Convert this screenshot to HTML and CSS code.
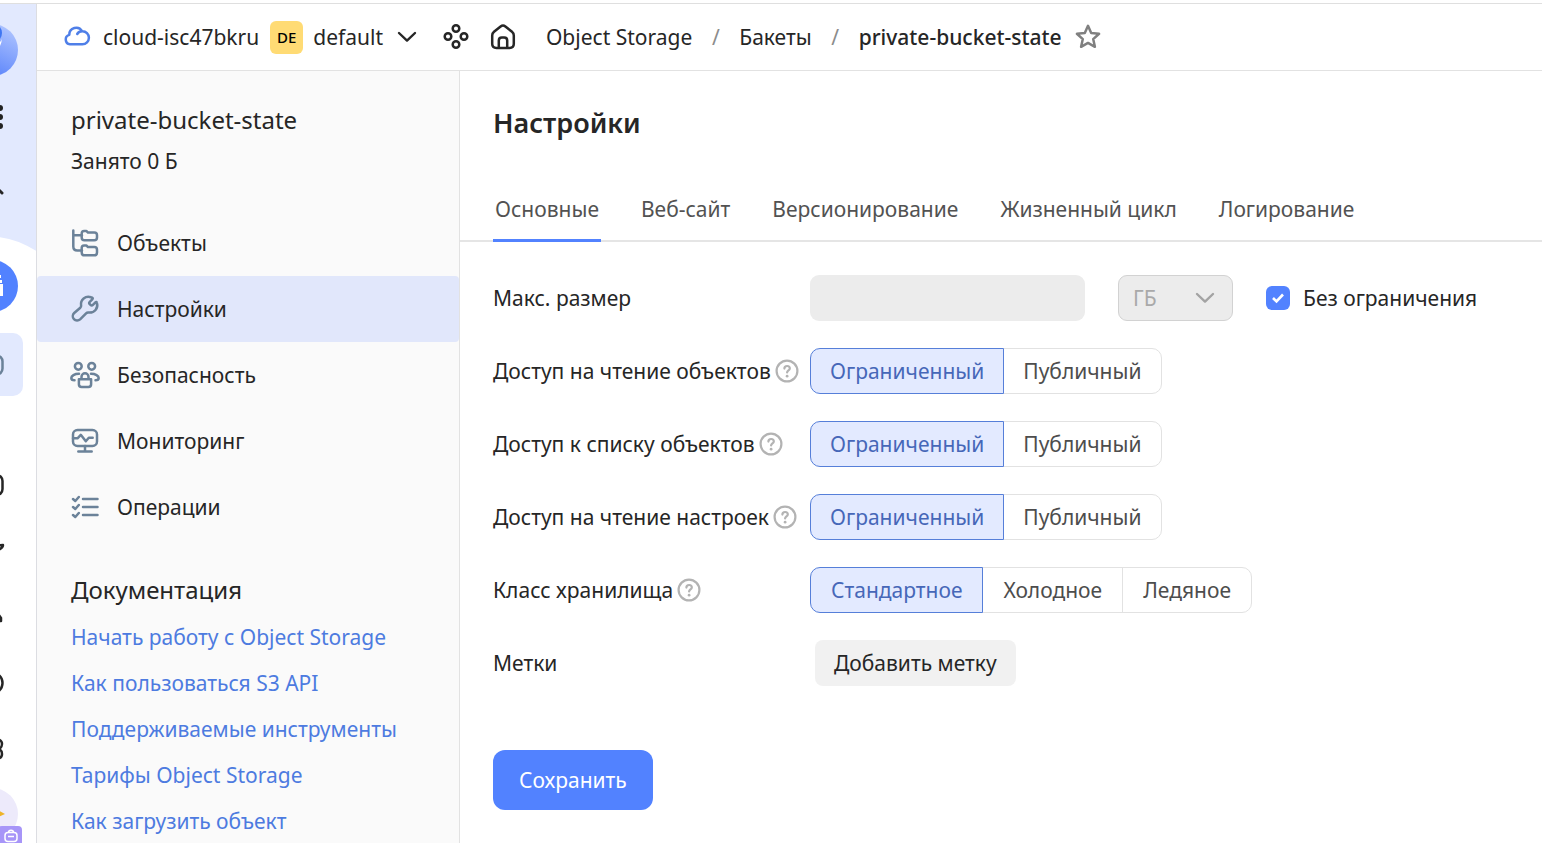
FILE: index.html
```html
<!DOCTYPE html>
<html lang="ru">
<head>
<meta charset="utf-8">
<meta name="viewport" content="width=device-width, initial-scale=1">
<title>private-bucket-state</title>
<link rel="stylesheet" href="styles.css">
</head>
<body>
<svg class="defs" aria-hidden="true">
  <symbol id="help" viewBox="0 0 24 24"><circle cx="12" cy="12" r="10.4" stroke-width="2.2"/><path d="M9.4 9.6c0-1.500 1.100-2.600 2.700-2.600s2.700 1 2.700 2.400c0 2-2.700 2.100-2.700 4.100" stroke-width="2.2"/><path d="M12.1 17.100v.1" stroke-width="2.8"/></symbol>
  <symbol id="chevron" viewBox="0 0 20 12"><path d="m2 2 8 7.600 8-7.600" stroke-width="2.400"/></symbol>
</svg>
<div class="app">
  <nav class="rail" aria-label="Сервисы">
    <div class="rail-top">
      <a class="rail-logo" href="#" aria-label="Главная"><svg width="52" height="52" viewBox="0 0 52 52"><defs><linearGradient id="g" x1="1" y1="0" x2="0.500" y2="1"><stop offset="0" stop-color="#b9ccff"/><stop offset="1" stop-color="#5b84fb"/></linearGradient></defs><circle cx="26" cy="26" r="26" fill="url(#g)"/><circle cx="26" cy="9" r="10" fill="#3f76f2"/><path d="M22 18c7 4 12 2 14-3-1 8-5 13-13 14z" fill="#fff"/></svg></a>
      <button class="rail-item" aria-label="Все сервисы"><svg class="ico" width="24" height="24" viewBox="0 0 24 24"><g fill="#222" stroke="none"><circle cx="3" cy="3" r="3"/><circle cx="11" cy="3" r="3"/><circle cx="20" cy="3" r="3"/><circle cx="3" cy="12" r="3"/><circle cx="11" cy="12" r="3"/><circle cx="20" cy="12" r="3"/><circle cx="3" cy="21" r="3"/><circle cx="11" cy="21" r="3"/><circle cx="20" cy="21" r="3"/></g></svg></button>
      <button class="rail-item" aria-label="Поиск"><svg class="ico" width="24" height="24" viewBox="0 0 24 24"><circle cx="9" cy="9" r="7.500"/><path d="m15 15 7 7" stroke-width="3"/></svg></button>
    </div>
    <svg class="rail-curve" width="90" height="19" viewBox="0 0 90 19"><path d="M0 15Q45-14 90 15.500V19H0z" fill="#fff"/></svg>
    <div class="rail-body">
      <a class="rail-service" href="#" aria-label="Object Storage"><svg width="32" height="32" viewBox="0 0 32 32" fill="#fff"><path d="M4 14h23v12H4zM7 10h19v3H7zM10 5h15v3H10z"/></svg></a>
      <a class="rail-tile" href="#" aria-label="Бакеты"><svg class="ico slate" width="24" height="24" viewBox="0 0 24 24"><rect x="1.500" y="2.500" width="21" height="19" rx="6"/></svg></a>
      <a class="rail-item" href="#" aria-label="Ресурсы"><svg class="ico" width="24" height="24" viewBox="0 0 24 24"><rect x="1.500" y="2" width="21" height="20" rx="6"/></svg></a>
      <a class="rail-item" href="#" aria-label="Избранное"><svg class="ico" width="24" height="24" viewBox="0 0 24 24"><path d="m12 1 3 5.500 8-.5c0 2-2 4-6 5.500"/></svg></a>
      <a class="rail-item" href="#" aria-label="Уведомления"><svg class="ico" width="24" height="24" viewBox="0 0 24 24"><path d="M5 16V9a6 6 0 0 1 13 0l3 4v3H5"/></svg></a>
      <a class="rail-item" href="#" aria-label="Поддержка"><svg class="ico" width="24" height="24" viewBox="0 0 24 24"><circle cx="12" cy="12" r="10.500"/></svg></a>
      <a class="rail-item" href="#" aria-label="Параметры"><svg class="ico" width="24" height="24" viewBox="0 0 24 24"><path d="M12 2h5q5 1 5 5 0 3-2.500 5 2.500 2 2.500 5 0 4-5 5h-5"/></svg></a>
      <a class="rail-avatar" href="#" aria-label="Профиль"><svg width="52" height="52" viewBox="0 0 52 52"><circle cx="26" cy="26" r="26" fill="#edeafb"/><path d="m28 20 11 6-11 5z" fill="#eeb42a"/></svg><svg class="rail-badge" width="24" height="24" viewBox="0 0 24 24"><rect width="24" height="24" rx="4" fill="#a795f8"/><g fill="none" stroke="#fff" stroke-width="1.500"><rect x="7" y="6.500" width="12" height="9" rx="3"/><path d="M10.500 6.500c0-3 5-3 5 0M10 10.500h6"/></g></svg></a>
    </div>
  </nav>

  <div class="page">
    <header class="header">
      <a class="cloud" href="#"><svg class="ico" width="28" height="28" viewBox="0 0 28 28"><path d="M7 21.300h12.400a6.500 6.500 0 1 0 0-13c-2.400 0-4.200 1-5.200 2.700M19.200 8.300a6.900 6.900 0 0 0-12.900 3.600A4.800 4.800 0 0 0 7 21.300"/></svg><span>cloud-isc47bkru</span></a>
      <button class="folder"><span class="folder-badge">DE</span><span>default</span><svg class="ico folder-arrow" width="20" height="12"><use href="#chevron"/></svg></button>
      <button class="icon-btn" aria-label="Карта ресурсов"><svg class="ico" width="28" height="28" viewBox="0 0 28 28"><circle cx="14" cy="5.500" r="3.300"/><circle cx="6" cy="13.500" r="3.300"/><circle cx="22" cy="13.500" r="3.300"/><circle cx="14" cy="21.500" r="3.300"/></svg></button>
      <a class="icon-btn" href="#" aria-label="Домой"><svg class="ico" width="28" height="28" viewBox="0 0 28 28"><path d="M3.200 12.500c0-1.600.6-2.700 1.800-3.700l6.600-5.300c1.500-1.200 3.300-1.200 4.800 0L23 8.800c1.200 1 1.800 2.100 1.800 3.700v8.300c0 2.500-1.700 4.200-4.200 4.200H7.400c-2.500 0-4.200-1.700-4.200-4.200zM9.800 25v-7.400c0-2 1.200-3.100 3-3.100h2.400c1.800 0 3 1.100 3 3.100V25"/></svg></a>
      <nav class="crumbs" aria-label="Навигация">
        <a href="#">Object Storage</a><span class="slash">/</span><a href="#">Бакеты</a><span class="slash">/</span><a class="crumb-current" href="#" aria-current="page">private-bucket-state</a>
      </nav>
      <button class="icon-btn star" aria-label="В избранное"><svg class="ico" width="28" height="28" viewBox="0 0 28 28"><path d="m14 2.800 3.200 7.200 7.900.8-5.900 5.300 1.700 7.700L14 19.900l-6.900 3.900 1.700-7.700-5.900-5.300 7.900-.8z"/></svg></button>
    </header>

    <div class="body">
      <aside class="sidebar">
        <div class="bucket">
          <div class="bucket-name">private-bucket-state</div>
          <div>Занято 0 Б</div>
        </div>
        <nav class="menu" aria-label="Бакет">
          <a class="menu-item" href="#"><svg class="ico slate" width="28" height="28" viewBox="0 0 28 28"><path d="M2.300 1.500v16c0 2.500 1.500 4 4 4H11M2.300 6.300H11M10.700 4.500c0-1.700.9-2.600 2.400-2.600h2.200l1.700 1.700h6.300c1.700 0 2.700 1 2.700 2.600v2.300c0 1.800-1 2.800-2.700 2.800h-9.900c-1.700 0-2.700-1-2.700-2.800zM10.700 19c0-1.700.9-2.600 2.400-2.600h2.200l1.700 1.700h6.300c1.700 0 2.700 1 2.700 2.600v2.800c0 1.800-1 2.800-2.700 2.800h-9.900c-1.700 0-2.700-1-2.700-2.800z"/></svg><span>Объекты</span></a>
          <a class="menu-item active" href="#" aria-current="page"><svg class="ico slate" width="28" height="28" viewBox="0 0 28 28"><path d="M20 2.300c-5.400-1.800-10.900 2.300-9.900 8.400.1.900-.2 1.400-.8 2L3.200 18a4.200 4.200 0 0 0 5.900 6.400l6-6.100c.6-.6 1.100-.8 2-.8 6.500.9 10.400-4.400 8.800-9.700-.2-.8-.9-1-1.500-.4l-2.500 2.500c-.8.800-1.600.8-2.400 0l-.7-.7c-.8-.8-.8-1.600 0-2.400l2.700-2.700c.6-.6.200-1.500-1.500-1.800z"/></svg><span>Настройки</span></a>
          <a class="menu-item" href="#"><svg class="ico slate" width="28" height="28" viewBox="0 0 28 28"><circle cx="7.300" cy="5.300" r="3.400"/><circle cx="20.700" cy="5.300" r="3.400"/><path d="M8 12.800c-4.600 0-7.700 2-7.700 4.200 0 1.400 1.200 2.300 3.200 2.300M20 12.800c4.600 0 7.700 2 7.700 4.200 0 1.400-1.200 2.300-3.200 2.300M10.500 17.500v-1.700a3.500 3.500 0 0 1 7 0v1.700M7.900 18.200h12.200v5c0 1.800-1 2.700-2.700 2.700h-6.800c-1.700 0-2.700-.9-2.700-2.700z"/></svg><span>Безопасность</span></a>
          <a class="menu-item" href="#"><svg class="ico slate" width="28" height="28" viewBox="0 0 28 28"><rect x="2" y="3" width="24" height="16" rx="4.500"/><path d="M14 19v5.600M7.300 24.600h13.400M2 11.300h4.500l3.300-3.500 5 6.500 3-3.500h3.900"/></svg><span>Мониторинг</span></a>
          <a class="menu-item" href="#"><svg class="ico slate" width="28" height="28" viewBox="0 0 28 28"><path d="M12 6h14.500M12 14h14.500M12 22h14.500M2 6l2.300 2 3.500-4M2 14l2.300 2 3.500-4M2 22l2.300 2 3.500-4"/></svg><span>Операции</span></a>
        </nav>
        <section class="docs">
          <h2 class="docs-title">Документация</h2>
          <a href="#">Начать работу с Object Storage</a>
          <a href="#">Как пользоваться S3 API</a>
          <a href="#">Поддерживаемые инструменты</a>
          <a href="#">Тарифы Object Storage</a>
          <a href="#">Как загрузить объект</a>
        </section>
      </aside>

      <main class="content">
        <h1 class="title">Настройки</h1>
        <div class="tabs" role="tablist">
          <button class="tab selected" role="tab" aria-selected="true">Основные</button>
          <button class="tab" role="tab">Веб-сайт</button>
          <button class="tab" role="tab">Версионирование</button>
          <button class="tab" role="tab">Жизненный цикл</button>
          <button class="tab" role="tab">Логирование</button>
        </div>
        <form class="form">
          <div class="row">
            <label class="label" for="size">Макс. размер</label>
            <div class="size">
              <input class="size-input" id="size" type="text" disabled>
              <span class="unit"><select class="unit-select" aria-label="Единица" disabled><option>ГБ</option></select><svg class="ico unit-arrow" width="20" height="12"><use href="#chevron"/></svg></span>
              <label class="check"><span class="check-stack"><input class="check-box" type="checkbox" checked><svg class="check-mark" width="24" height="24" viewBox="0 0 24 24"><path d="m7 12 3.500 3.500 6.500-7"/></svg></span><span>Без ограничения</span></label>
            </div>
          </div>
          <div class="row">
            <div class="label" id="l1">Доступ на чтение объектов<svg class="ico help" width="24" height="24"><use href="#help"/></svg></div>
            <div class="segments" role="radiogroup" aria-labelledby="l1">
              <label class="segment"><input type="radio" name="read" checked><span>Ограниченный</span></label>
              <label class="segment"><input type="radio" name="read"><span>Публичный</span></label>
            </div>
          </div>
          <div class="row">
            <div class="label" id="l2">Доступ к списку объектов<svg class="ico help" width="24" height="24"><use href="#help"/></svg></div>
            <div class="segments" role="radiogroup" aria-labelledby="l2">
              <label class="segment"><input type="radio" name="list" checked><span>Ограниченный</span></label>
              <label class="segment"><input type="radio" name="list"><span>Публичный</span></label>
            </div>
          </div>
          <div class="row">
            <div class="label" id="l3">Доступ на чтение настроек<svg class="ico help" width="24" height="24"><use href="#help"/></svg></div>
            <div class="segments" role="radiogroup" aria-labelledby="l3">
              <label class="segment"><input type="radio" name="config" checked><span>Ограниченный</span></label>
              <label class="segment"><input type="radio" name="config"><span>Публичный</span></label>
            </div>
          </div>
          <div class="row">
            <div class="label" id="l4">Класс хранилища<svg class="ico help" width="24" height="24"><use href="#help"/></svg></div>
            <div class="segments three" role="radiogroup" aria-labelledby="l4">
              <label class="segment"><input type="radio" name="class" checked><span>Стандартное</span></label>
              <label class="segment"><input type="radio" name="class"><span>Холодное</span></label>
              <label class="segment"><input type="radio" name="class"><span>Ледяное</span></label>
            </div>
          </div>
          <div class="row">
            <div class="label">Метки</div>
            <div class="tags"><button class="add" type="button">Добавить метку</button></div>
          </div>
          <button class="save" type="button">Сохранить</button>
        </form>
      </main>
    </div>
  </div>
</div>
</body>
</html>
```
FILE: styles.css
```css
* { box-sizing: border-box; }

body {
  margin: 0;
  background: #fff;
  color: #262626;
  font: 21px/28px "Noto Sans", "Open Sans", sans-serif;
}

a { color: inherit; text-decoration: none; }

button, input, select { font: inherit; color: inherit; }

button { border: 0; padding: 0; background: none; cursor: pointer; }

.defs { display: none; }

.ico {
  flex: none;
  fill: none;
  stroke: currentColor;
  stroke-width: 2.5;
  stroke-linecap: round;
  stroke-linejoin: round;
  overflow: visible;
}

.slate { color: #6b8299; }

.app {
  display: flex;
  min-height: 100vh;
  padding-top: 4px;
  background: linear-gradient(#fff 3px, #dfdfdf 3px, #dfdfdf 4px, #fff 4px);
  overflow: clip;
}

/* service rail, scrolled partly off the left edge */
.rail {
  flex: none;
  width: 90px;
  height: calc(100vh - 4px);
  margin-left: -53px;
  border-right: 1px solid #dcdde2;
  overflow: clip;
}

.rail-top {
  display: flex;
  flex-direction: column;
  align-items: center;
  padding: 20px 0;
  background: #e2e9fe;
}

.rail-logo { display: flex; margin-bottom: 8px; }

.rail-item {
  display: flex;
  align-items: center;
  justify-content: center;
  width: 62px;
  height: 66px;
}

.rail-curve { display: block; background: #e2e9fe; }

.rail-body { display: flex; flex-direction: column; align-items: center; }

.rail-service {
  display: flex;
  align-items: center;
  justify-content: center;
  width: 52px;
  height: 52px;
  margin: 5px 0 21px;
  border-radius: 50%;
  background: #5282ff;
}

.rail-tile {
  display: flex;
  align-items: center;
  justify-content: center;
  width: 62px;
  height: 63px;
  margin-bottom: 56px;
  border-radius: 10px;
  background: #e2e9fe;
}

.rail-avatar { position: relative; display: flex; height: 52px; margin-top: 6px; }

.rail-badge { position: absolute; right: -4px; top: 38px; }

.page { flex: 1; display: flex; flex-direction: column; min-width: 0; }

.header {
  display: flex;
  align-items: center;
  height: 67px;
  padding: 0 26px;
  border-bottom: 1px solid #e2e2e2;
  white-space: nowrap;
}

.cloud { display: flex; align-items: center; gap: 12px; margin-right: 11px; }
.cloud .ico { color: #4f7fe8; }

.folder { display: flex; align-items: center; gap: 10px; margin-right: 25px; }

.folder-badge {
  width: 33px;
  border-radius: 6px;
  background: #ffdb74;
  color: #000;
  font-size: 15px;
  font-weight: 500;
  line-height: 33px;
  text-align: center;
}

.folder-arrow { margin-left: 4px; }

.icon-btn { display: flex; margin-right: 19px; }

.crumbs { display: flex; margin-left: 10px; }
.slash { width: 47px; color: #8c8c8c; text-align: center; }
.crumb-current { font-weight: 500; }
.star { margin: 0 0 0 12px; color: #808080; }

.body { flex: 1; display: flex; }

.sidebar {
  flex: none;
  width: 423px;
  border-right: 1px solid #e2e2e2;
  background: #fafafa;
}

.bucket { display: flex; flex-direction: column; gap: 12px; padding: 34px 34px 35px; }
.bucket-name { font-size: 24px; line-height: 30px; }

.menu-item {
  display: flex;
  align-items: center;
  gap: 18px;
  height: 66px;
  padding: 0 34px;
}

.menu-item.active { border-radius: 4px; background: #e1e7fb; }

.docs { display: flex; flex-direction: column; gap: 18px; padding: 35px 34px 0; color: #4d7be0; }
.docs-title { margin: 0; color: #262626; font-size: 24px; font-weight: 400; line-height: 30px; }

.content { flex: 1; min-width: 0; }

.title { margin: 0; padding: 34px 33px 0; font-size: 27px; font-weight: 600; line-height: 36px; }

.tabs {
  display: flex;
  gap: 38px;
  margin-top: 54px;
  padding: 0 33px;
  border-bottom: 2px solid #e5e5e5;
}

.tab {
  margin-bottom: -2px;
  padding: 0 2px 16px;
  border-bottom: 3px solid transparent;
  color: #525252;
  white-space: nowrap;
}

.tab.selected { border-color: #5282ff; }

.form { display: flex; flex-direction: column; gap: 27px; padding: 33px; }

.row { display: grid; grid-template-columns: 317px 1fr; align-items: center; min-height: 46px; }

.label { display: flex; align-items: center; white-space: nowrap; }

.help { margin-left: 4px; color: #b3b3b3; }

.size { display: flex; align-items: center; gap: 33px; }

.size-input {
  width: 275px;
  height: 46px;
  border: 0;
  border-radius: 9px;
  background: #ececec;
}

.unit { display: grid; align-items: center; width: 115px; }

.unit-select {
  grid-area: 1 / 1;
  height: 46px;
  padding: 0 14px;
  border: 1px solid #d2d2d2;
  border-radius: 9px;
  background: #ececec;
  color: #a9a9a9;
  opacity: 1;
  appearance: none;
}

.unit-arrow { grid-area: 1 / 1; justify-self: end; margin-right: 18px; color: #a3a3a3; }

.check { display: flex; align-items: center; gap: 13px; white-space: nowrap; }
.check-stack { display: grid; }

.check-box {
  grid-area: 1 / 1;
  width: 24px;
  height: 24px;
  margin: 0;
  border-radius: 6px;
  background: #5282ff;
  appearance: none;
}

.check-mark { grid-area: 1 / 1; fill: none; stroke: #fff; stroke-width: 2.6; pointer-events: none; }

.segments { display: flex; }

.segment { display: grid; color: #4d4d4d; cursor: pointer; white-space: nowrap; }
.segment + .segment { margin-left: -1px; }

.segment input {
  grid-area: 1 / 1;
  width: 100%;
  height: 46px;
  margin: 0;
  border: 1px solid #e2e2e2;
  appearance: none;
}

.segment span { z-index: 1; grid-area: 1 / 1; align-self: center; padding: 0 20px; }
.three .segment span { padding: 0 21px; }
.segment:first-child input { border-radius: 10px 0 0 10px; }
.segment:last-child input { border-radius: 0 10px 10px 0; }
.segment:has(:checked) { z-index: 1; color: #4667b8; }
.segment input:checked { border-color: #567fd9; background: #e3eaff; }

.tags { padding-left: 5px; }

.add { height: 46px; padding: 0 19px; border-radius: 8px; background: #f1f1f1; }

.save {
  align-self: flex-start;
  height: 60px;
  margin-top: 37px;
  padding: 0 26px;
  border-radius: 12px;
  background: #5282ff;
  color: #fff;
}
```
